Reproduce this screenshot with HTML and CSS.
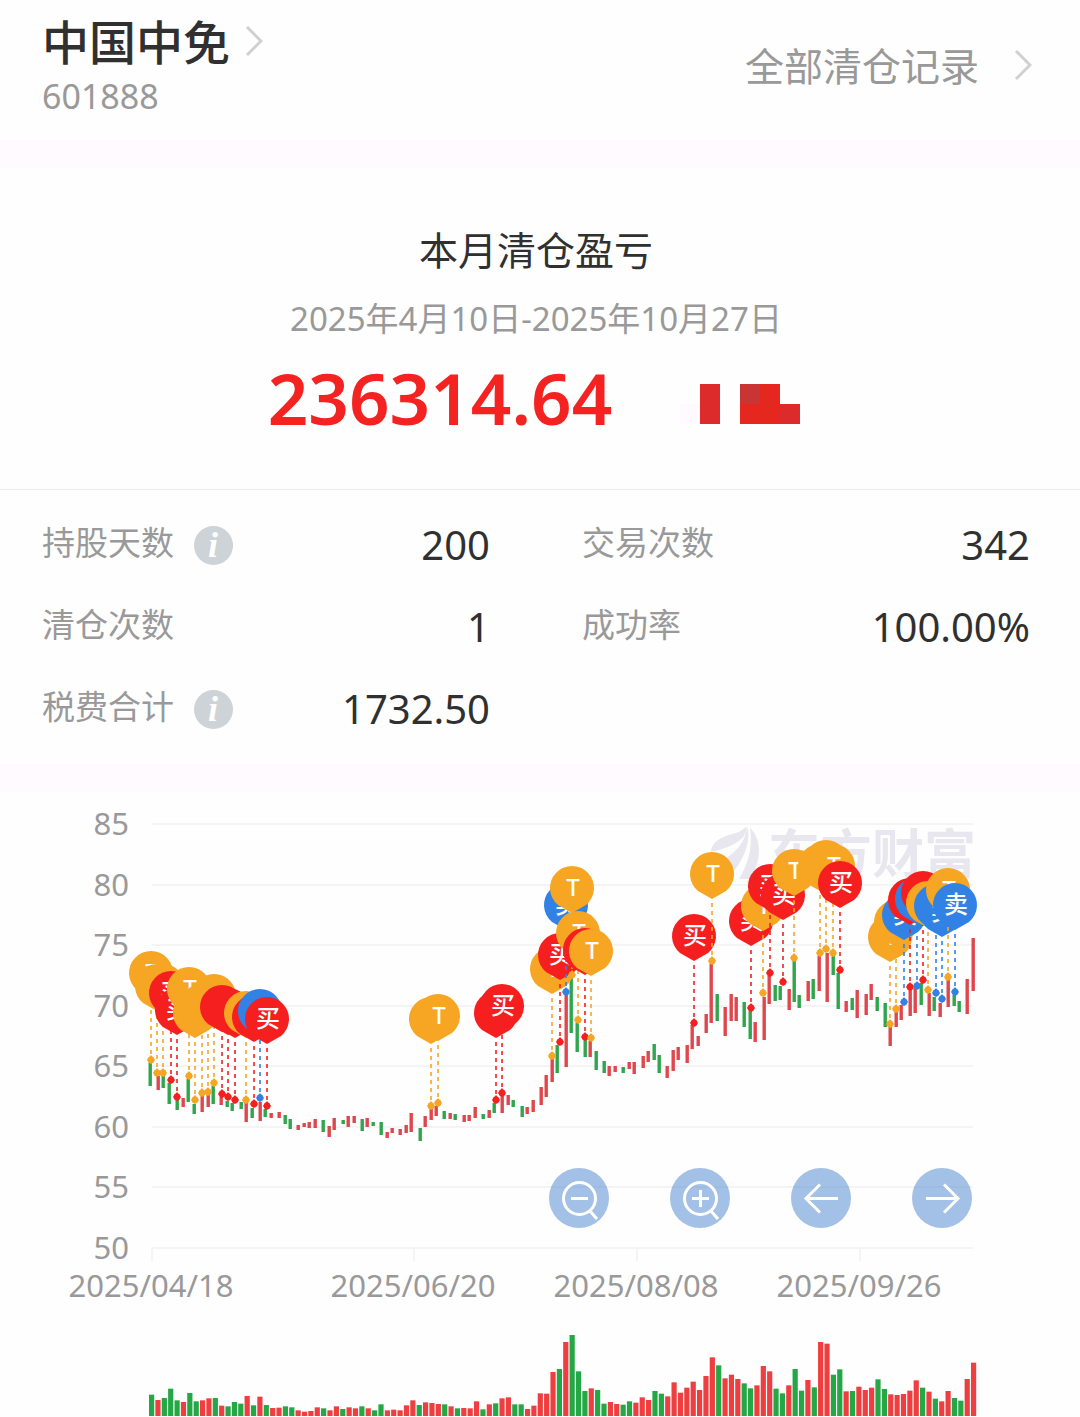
FILE: index.html
```
<!DOCTYPE html>
<html lang="zh-CN">
<head>
<meta charset="utf-8">
<meta name="viewport" content="width=device-width, initial-scale=1">
<title>中国中免 清仓记录</title>
<link rel="stylesheet" href="styles.css">
</head>
<body>
<header class="stock-header">
  <div>
    <h1 class="stock-name"><a class="stock-link" href="#stock">中国中免
      <svg class="chevron" viewBox="0 0 18 32" aria-hidden="true"><path d="M2 1L16 15L2 29"/></svg></a></h1>
    <p class="stock-code">601888</p>
  </div>
  <a class="all-records" href="#records">全部清仓记录
    <svg class="chevron" viewBox="0 0 18 32" aria-hidden="true"><path d="M2 1L16 15L2 29"/></svg></a>
</header>

<main>
  <section class="summary">
    <h2 class="summary-title">本月清仓盈亏</h2>
    <p class="summary-range">2025年4月10日-2025年10月27日</p>
    <div class="summary-result">
      <strong class="amount">236314.64</strong>
      <svg class="mask" viewBox="0 0 130 40" shape-rendering="crispEdges" aria-hidden="true">
        <path fill="#fefaff" d="M0 20h20v20H0z"/>
        <path fill="#dd2b2b" d="M20 0h20v40H20zM100 20h20v20h-20z"/>
        <path fill="#e6271f" d="M60 0h40v40H60z"/>
        <path fill="#c93435" d="M60 0h20v20H60z"/>
      </svg>
    </div>
  </section>

  <dl class="stats">
    <div class="stat">
      <dt><span class="stat-name">持股天数</span> <button class="info" type="button" aria-label="持股天数说明"><svg viewBox="0 0 39 39" aria-hidden="true"><circle cx="19.5" cy="19.5" r="19.5"/><text x="19" y="31">i</text></svg></button></dt>
      <dd>200</dd>
    </div>
    <div class="stat"><dt><span class="stat-name">交易次数</span></dt><dd>342</dd></div>
    <div class="stat"><dt><span class="stat-name">清仓次数</span></dt><dd>1</dd></div>
    <div class="stat"><dt><span class="stat-name">成功率</span></dt><dd>100.00%</dd></div>
    <div class="stat">
      <dt><span class="stat-name">税费合计</span> <button class="info" type="button" aria-label="税费合计说明"><svg viewBox="0 0 39 39" aria-hidden="true"><circle cx="19.5" cy="19.5" r="19.5"/><text x="19" y="31">i</text></svg></button></dt>
      <dd>1732.50</dd>
    </div>
  </dl>

  <section class="chart-panel" aria-label="买卖点走势图">
    <svg class="chart" viewBox="0 792 1080 625" role="img" aria-label="股价与成交量">
      <g class="grid" id="grid"></g>
      <g class="watermark">
        <path d="M711 852C712 840 724 836 736 833C741 831 744 829 746 827C748 838 734 847 711 852Z"/>
        <path d="M720 862C736 853 746 842 747 826C752 842 742 862 733 872C729 868 724 865 720 862Z"/>
        <path d="M739 879C748 864 753 848 750 828C761 838 763 859 750 879Z"/>
        <text x="768" y="873">东方财富</text>
      </g>
      <g id="candles"></g>
      <g id="volume"></g>
      <g id="markers"></g>
    </svg>
    <div class="controls">
      <button type="button" aria-label="缩小"><svg viewBox="0 0 60 60" aria-hidden="true"><circle cx="30.500" cy="30.500" r="16"/><path d="M22 30.500h17M41 43l7 8"/></svg></button>
      <button type="button" aria-label="放大"><svg viewBox="0 0 60 60" aria-hidden="true"><circle cx="30.500" cy="30.500" r="16"/><path d="M22 30.500h17M30.500 22v17M41 43l7 8"/></svg></button>
      <button type="button" aria-label="向左"><svg viewBox="0 0 60 60" aria-hidden="true"><path d="M47 30.500H15M29 16.500L15 30.500L29 44.500"/></svg></button>
      <button type="button" aria-label="向右"><svg viewBox="0 0 60 60" aria-hidden="true"><path d="M14 30.500H46M32 16.500L46 30.500L32 44.500"/></svg></button>
    </div>
  </section>
</main>
<script src="chart.js"></script>
</body>
</html>
```
FILE: styles.css
```
* {
  box-sizing: border-box;
}

body {
  margin: 0;
  background: #fefefe;
  color: #303030;
  font-family: "Noto Sans", "Noto Sans CJK SC", sans-serif;
}

h1, h2, p, dl, dd {
  margin: 0;
  font-weight: 400;
}

a {
  color: inherit;
  text-decoration: none;
}

button {
  padding: 0;
  border: 0;
  background: none;
  cursor: pointer;
}

svg {
  display: block;
}

.stock-header {
  display: flex;
  justify-content: space-between;
  padding: 12px 48px 20px 42px;
}

.stock-name {
  font-size: 47px;
  line-height: 60px;
}

.stock-link {
  display: flex;
  align-items: center;
  gap: 15px;
  font-weight: 500;
}

.stock-code {
  color: #999;
  font-size: 34px;
  line-height: 48px;
}

.all-records {
  display: flex;
  align-items: center;
  gap: 35px;
  color: #999;
  font-size: 39px;
  line-height: 60px;
}

.chevron {
  width: 18px;
  height: 32px;
  fill: none;
  stroke: #d0d0d0;
  stroke-width: 3;
}

.summary {
  display: flex;
  flex-direction: column;
  align-items: center;
  padding: 52px 8px 46px 0;
  border-top: 28px solid #fefaff;
  border-bottom: 1px solid #ececec;
  text-align: center;
}

.summary-title {
  font-size: 39px;
  line-height: 60px;
}

.summary-range {
  padding-top: 14px;
  color: #999;
  font-size: 33px;
  line-height: 50px;
}

.summary-result {
  display: flex;
  align-items: flex-end;
  gap: 68px;
  padding: 9px 0 0 6px;
}

.amount {
  color: #f52222;
  font-size: 71px;
  font-weight: 600;
  line-height: 90px;
}

.mask {
  width: 130px;
  height: 40px;
  margin-bottom: 19px;
}

.stats {
  display: grid;
  grid-template-columns: 1fr 1fr;
  column-gap: 92px;
  padding: 14px 50px 14px 42px;
}

.stat {
  display: flex;
  justify-content: space-between;
  align-items: center;
  height: 82px;
}

.stat dt {
  display: flex;
  align-items: center;
  gap: 20px;
  color: #999;
  font-size: 33px;
  line-height: 40px;
}

.stat-name {
  padding-bottom: 4px;
}

.stat dd {
  font-size: 40px;
  line-height: 48px;
}

.info svg {
  width: 39px;
  height: 39px;
}

.info circle {
  fill: #ced3d7;
}

.info text {
  fill: #fff;
  font: italic 700 36px "Liberation Serif", serif;
  text-anchor: middle;
}

.chart-panel {
  position: relative;
  border-top: 28px solid #fefaff;
}

.chart {
  width: 100%;
}

.grid line {
  stroke: #f4f4f5;
  stroke-width: 2;
}

.grid text {
  fill: #999;
  font-size: 31px;
}

.watermark {
  fill: #e8e7f0;
}

.watermark text {
  font-family: "Noto Sans CJK SC", sans-serif;
  font-size: 52px;
  font-weight: 700;
}

.pin-label {
  fill: #fff;
  font-size: 24px;
  font-weight: 500;
  text-anchor: middle;
}

.controls {
  position: absolute;
  top: 376px;
  right: 10%;
  display: flex;
  gap: 61px;
}

.controls button {
  width: 60px;
  height: 60px;
  border-radius: 50%;
  background: rgba(72, 132, 206, 0.5);
}

.controls svg {
  fill: none;
  stroke: #fff;
  stroke-width: 3;
}
```
FILE: chart.js
```
const RED = '#e0474c';
const GREEN = '#2fa54c';

// x, high, low, direction (r = up, g = down)
const candles = `150 1063 1086 g,158 1076 1090 r,163 1076 1088 g,169 1083 1104 g,177 1099 1110 g,183 1098 1107 r,188 1079 1102 g,194 1104 1114 g,202 1096 1112 r,208 1095 1107 r,213 1086 1104 g,221 1097 1105 r,227 1101 1107 g,232 1103 1111 g,241 1102 1109 g,246 1103 1122 r,252 1108 1118 g,260 1102 1121 r,265 1109 1117 g,271 1113 1118 r,279 1112 1118 r,285 1115 1124 g,290 1119 1129 g,298 1125 1130 r,304 1123 1127 r,309 1122 1128 r,315 1119 1128 r,323 1120 1132 g,329 1126 1137 r,334 1118 1130 r,343 1120 1124 g,348 1116 1127 r,354 1116 1123 r,362 1119 1131 g,367 1118 1127 r,373 1122 1126 g,381 1122 1135 g,387 1132 1138 r,392 1128 1133 r,400 1129 1135 r,406 1125 1133 r,411 1113 1132 r,420 1128 1141 g,425 1116 1127 r,431 1109 1120 r,436 1106 1116 r,444 1111 1119 g,450 1113 1119 r,455 1114 1120 g,464 1115 1122 r,469 1115 1121 r,475 1107 1118 r,483 1114 1119 g,489 1110 1118 r,494 1103 1113 g,502 1095 1113 r,508 1095 1105 r,513 1100 1107 g,522 1106 1117 g,527 1107 1114 r,533 1100 1112 r,541 1087 1105 r,546 1075 1097 r,552 1059 1082 r,557 1045 1073 g,566 994 1067 r,571 978 1033 g,577 1023 1052 g,585 1040 1057 g,590 1041 1057 r,596 1051 1070 g,604 1061 1073 g,609 1066 1076 r,615 1066 1072 r,623 1067 1073 g,629 1062 1069 r,634 1062 1074 r,643 1056 1068 r,648 1051 1062 r,654 1044 1060 g,659 1055 1073 g,667 1066 1078 r,673 1050 1071 r,678 1047 1060 r,687 1045 1063 r,692 1025 1049 r,698 1036 1046 r,706 1014 1033 r,711 964 1023 r,717 994 1021 g,725 1007 1036 r,731 994 1021 r,736 997 1021 r,744 1002 1027 g,750 1011 1039 g,755 1022 1042 r,764 997 1040 r,769 976 1004 r,775 985 1001 g,780 986 1000 g,789 989 1010 r,794 961 1002 g,799 995 1008 g,808 981 1001 r,813 979 999 g,819 956 991 r,827 953 1002 r,833 956 975 g,838 973 1009 g,846 1001 1012 r,852 998 1010 g,857 990 1018 r,866 994 1015 r,871 984 1000 r,877 997 1011 g,885 1003 1027 g,890 1025 1046 r,896 1012 1027 r,901 1005 1020 r,910 988 1016 r,915 988 1013 r,921 983 1005 g,929 993 1016 r,934 997 1011 g,940 1003 1017 r,948 979 1007 r,954 995 1006 g,959 1001 1012 g,967 979 1014 r,973 938 991 r`;

// volume in thirds of a chart unit, prefixed with the direction
const volumes = 'g64 r48 g54 g82 g47 r42 g69 g44 r47 r53 g54 r31 g29 g42 g37 r60 g32 r58 g33 r24 r25 g29 g26 r17 r13 r15 r26 g23 r17 r29 g21 r26 r23 g29 r23 g17 g35 r17 r19 r17 r32 r47 g33 r41 r39 r36 g35 r29 g23 r24 r23 r44 g20 r35 g38 r53 r56 g35 g35 r21 r31 r68 r67 r132 g141 r222 g243 g134 g75 r83 g78 g37 r42 r36 g34 g44 r40 r56 r48 g75 g67 r59 r101 r70 r85 r103 r78 r120 r176 g152 r113 r124 r111 g98 g83 r92 r150 r134 g82 g68 r92 g141 g76 r108 g86 r222 r217 g124 g140 r74 g75 r88 r78 r85 g110 g81 r65 r63 r66 r76 r107 g85 r73 g52 r44 r75 g54 g46 r111 r160';

// x, price point, kind: t = 做T, b = 买, s = 卖
const markers = `151 1060 t,157 1073 t,163 1073 t,171 1080 b,177 1097 b,189 1076 t,195 1100 t,202 1093 t,208 1092 t,214 1083 t,222 1094 b,228 1097 b,235 1100 b,246 1100 t,254 1104 b,260 1098 s,267 1106 b,431 1106 t,438 1103 t,496 1100 b,502 1093 b,552 1056 t,560 1042 b,566 992 s,572 975 t,578 1020 t,585 1037 b,591 1038 t,694 1023 b,712 961 t,751 1008 b,763 993 t,770 973 b,783 982 b,794 958 t,820 953 t,826 949 t,833 953 t,840 970 b,890 1024 t,896 1009 t,904 1002 s,910 987 b,917 986 s,923 980 b,928 990 t,936 993 s,942 999 s,948 977 t,955 992 s`;

const kinds = {
  t: { color: '#f6a623', label: 'T' },
  b: { color: '#f61f1f', label: '买' },
  s: { color: '#3182e4', label: '卖' }
};
const STEM = 62;

const put = (id, markup) => { document.getElementById(id).innerHTML = markup; };
const rows = text => text.split(',').map(row => row.split(' '));

let grid = '';
for (let i = 0; i < 8; i++) {
  const y = Math.round(824 + i * 60.5);
  grid += `<line x1="152" x2="973" y1="${y}" y2="${y}"/><text x="129" y="${y + 11}" text-anchor="end">${85 - i * 5}</text>`;
}
[[152, '2025/04/18'], [414, '2025/06/20'], [637, '2025/08/08'], [860, '2025/09/26']].forEach(([x, day]) => {
  grid += `<line x1="${x}" x2="${x}" y1="1248" y2="1261"/><text x="${x - 1}" y="1297" text-anchor="middle">${day}</text>`;
});
put('grid', grid);

put('candles', rows(candles).map(([x, high, low, dir]) =>
  `<rect x="${x - 1.5}" y="${high}" width="3.4" height="${low - high}" fill="${dir === 'r' ? RED : GREEN}"/>`).join(''));

put('volume', volumes.split(' ').map((item, i) => {
  const height = item.slice(1) / 3;
  return `<rect x="${149 + i * 6.372}" y="${1416 - height}" width="5.2" height="${height}" fill="${item[0] === 'r' ? '#ef3e40' : '#24a745'}"/>`;
}).join(''));

put('markers', rows(markers).map(([x, y, kind], i, all) => {
  const { color, label } = kinds[kind];
  // a label is left out when a later pin covers it
  const covered = all.slice(i + 1).some(([nx, ny]) => Math.hypot(nx - x, ny - y) < 14);
  return `<g transform="translate(${x} ${y})">
    <path d="M0 ${-STEM}V0" stroke="${color}" stroke-width="1.6" stroke-dasharray="4 4" stroke-dashoffset="4"/>
    <path d="M0 -5L4 0L0 4L-4 0Z" fill="${color}"/>
    <circle r="3.4" fill="${color}"/>
    <path d="M0 ${-STEM}L-14 -70A22 22 0 1 1 14 -70Z" fill="${color}"/>
    ${covered ? '' : `<text class="pin-label" x="1" y="-79">${label}</text>`}
  </g>`;
}).join(''));
```
